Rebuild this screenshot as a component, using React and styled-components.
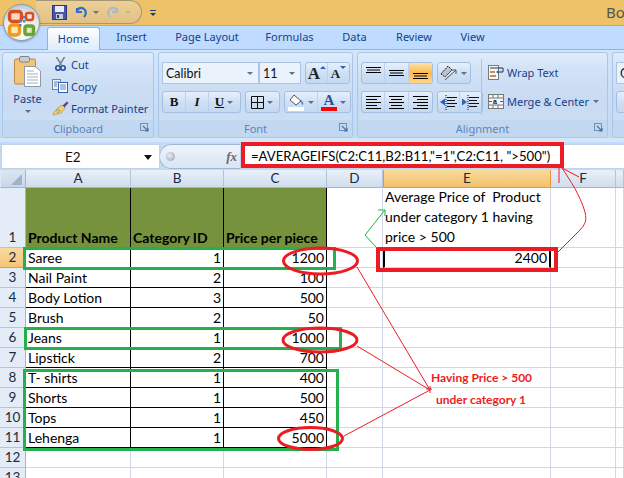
import React from "react";
import styled, { createGlobalStyle } from "styled-components";

const Global = createGlobalStyle`
  html, body { margin: 0; padding: 0; background: #fff; }
  * { box-sizing: border-box; }
`;
const UI = `"Noto Sans", "Open Sans", sans-serif`;
const CELL = `Lato, "Liberation Sans", sans-serif`;

const Window = styled.div`
  position: relative; width: 624px; height: 478px; overflow: hidden;
  display: flex; flex-direction: column; background: #bfdbff; font-family: ${UI};
`;
const TitleBar = styled.div`
  height: 26px; flex: none; background: #edc268; border-bottom: 1px solid #c9a664;
  display: flex; align-items: center; padding-left: 36px; position: relative;
`;
const QuickAccess = styled.div`
  height: 24px; width: 106px; margin-top: -1px; display: flex; align-items: center; padding-left: 16px;
  background: linear-gradient(#ecd096, #e2c184); border: 1px solid #a89678; border-left: none; border-radius: 0 13px 13px 0;
`;
const Spacer = styled.span`
  width: ${p => p.$w}px; flex: none; display: block;
`;
const Caret = styled.span`
  width: 0; height: 0; border-left: 3px solid transparent; border-right: 3px solid transparent;
  border-top: 3px solid ${p => p.$c || "#5a6f94"}; display: inline-block; flex: none;
  margin-left: ${p => p.$ml || 0}px;
`;
const Customize = styled.span`
  width: 6px; flex: none; margin-left: 8px; border-top: 1px solid #1f3d7a; padding-top: 2px; display: flex;
`;
const TitleText = styled.div`
  position: absolute; left: 606px; top: 2px; font-size: 15px; color: #555; white-space: nowrap;
`;
const OfficeBtn = styled.div`
  position: absolute; left: 3px; top: 4px; width: 37px; height: 37px; border-radius: 50%; z-index: 3;
  background: radial-gradient(circle at 50% 72%, #ffffff, #e6ebf1 55%, #a3afbd 100%);
  border: 1px solid #8c9aab; box-shadow: 0 1px 2px #0005; display: flex; align-items: center; justify-content: center;
`;
const Tabs = styled.div`
  height: 24px; flex: none; display: flex; padding-left: 47px; align-items: flex-end; font-size: 11px; color: #15428b;
  border-bottom: 1px solid #8db2e3; background: #bfdbff;
`;
const Tab = styled.div`
  height: 23px; width: ${p => p.$w}px; text-align: center; line-height: 22px; flex: none;
  ${p => p.$active && `background: linear-gradient(#fff, #dcebfb); border: 1px solid #8db2e3; border-bottom: none; border-radius: 3px 3px 0 0; height: 23px; margin-bottom:-1px;`}
`;
const Ribbon = styled.div`
  height: 92px; flex: none; display: flex; gap: 4px; padding: 2px 0 4px 2px;
  background: linear-gradient(#d3e5fa, #c2d9f3 94%, #b5e0ea 94%, #b5e0ea 96%, #d7e6f7 96%);
`;
const Group = styled.section`
  width: ${p => p.$w}px; flex: none; display: flex; flex-direction: column; position: relative;
  border: 1px solid #a9c6e8; border-radius: 3px; overflow: hidden;
  background: linear-gradient(#dfecfb, #d3e3f7 18%, #c7daf1 60%, #d2e3f6);
`;
const GroupBody = styled.div`
  flex: 1; min-height: 0; position: relative; display: flex;
`;
const GroupLabel = styled.div`
  height: 17px; flex: none; background: #c2d8f1; color: #5f84b7; font-size: 11px; text-align: center; line-height: 18px; position: relative;
`;
const Launcher = styled.svg`
  position: absolute; right: 3px; top: 3px;
`;
const PasteCol = styled.div`
  width: 47px; flex: none; display: flex; flex-direction: column; align-items: center; padding-top: 3px; padding-left: 2px; color: #15428b; font-size: 11px; line-height: 14px;
`;
const PasteLabel = styled.div` margin-top: 5px; margin-bottom: 4px; `;
const ClipCol = styled.div`
  display: flex; flex-direction: column; margin-left: 1px;
`;
const ClipRow = styled.div`
  height: 22px; display: flex; align-items: center; gap: 2px; color: #15428b; font-size: 11px; white-space: nowrap;
`;
const IconSlot = styled.span`
  width: 18px; flex: none; display: flex; justify-content: center;
`;
const Rows = styled.div`
  display: flex; flex-direction: column; gap: 7px; padding: 9px 0 0 3px;
`;
const ToolRow = styled.div`
  display: flex; gap: ${p => p.$gap ?? 4}px; height: 22px;
`;
const Combo = styled.div`
  width: ${p => p.$w}px; height: 22px; background: #eaf2fc; border: 1px solid #a9c4e4; font-family: ${CELL};
  font-size: 12.5px; color: #111; display: flex; align-items: center; padding: 0 5px 0 3px; justify-content: space-between;
`;
const BtnGroup = styled.div`
  display: flex; height: 22px; border: 1px solid #a3c0e2; border-radius: 3px; overflow: hidden;
  background: linear-gradient(#e6f0fc, #cfe0f5 50%, #c4d8f1);
  margin-left: ${p => p.$ml || 0}px;
`;
const Btn = styled.div`
  width: ${p => p.$w || 23}px; height: 100%; display: flex; align-items: center; justify-content: center; gap: 3px;
  border-right: 1px solid ${p => p.$last ? "transparent" : "#bcd2ec"};
  color: #111; font-family: "Liberation Serif", serif; font-weight: bold; font-size: 13px;
  ${p => p.$on && `background: linear-gradient(#fde3a8, #fbb950 50%, #fdd78a);`}
`;
const GrowBtn = styled(Btn)`
  align-items: flex-start; gap: 0; font-size: ${p => p.$size}px; line-height: 21px; color: #222; padding-left: 1px;
`;
const Arrow = styled.span`
  width: 0; height: 0; margin-top: 3px; border-left: 3px solid transparent; border-right: 3px solid transparent;
  ${p => p.$up ? "border-bottom: 3px solid #2f62b5;" : "border-top: 3px solid #2f62b5;"}
`;
const ColorA = styled.span`
  display: flex; flex-direction: column; align-items: center; width: 16px; font-size: 15px; line-height: 14px; color: #2f4f8f;
  border-bottom: 4px solid #f00;
`;
const Divider = styled.div`
  position: absolute; left: 123px; top: 6px; width: 1px; height: 56px; background: #a9c4e4;
`;
const WrapCol = styled.div`
  position: absolute; left: 130px; top: 8px; display: flex; flex-direction: column; gap: 7px; color: #15428b; font-size: 11px;
`;
const WrapRow = styled.div`
  height: 22px; display: flex; align-items: center; gap: 2px; white-space: nowrap;
`;
const FormulaBar = styled.div`
  height: 26px; flex: none; margin-top: 2px; display: flex; background: #c5d9f1; position: relative;
`;
const NameBox = styled.div`
  width: 159px; height: 25px; background: #fff; border: 1px solid #bfd3ea; font-family: ${CELL}; font-size: 13.5px; color: #111;
  display: flex; align-items: center; padding-left: 63px; margin-left: 1px; position: relative;
`;
const NameCaret = styled.span`
  position: absolute; right: 7px; top: 10px; border-left: 4px solid transparent; border-right: 4px solid transparent; border-top: 5px solid #111;
`;
const FxPill = styled.div`
  width: 81px; height: 25px; margin-left: -1px; background: linear-gradient(#eef4fc, #d8e5f4); border: 1px solid #9fb7d4;
  border-right: none; border-radius: 13px 0 0 13px; display: flex; align-items: center; padding-left: 6px; justify-content: space-between; padding-right: 3px;
`;
const Knob = styled.span`
  width: 9px; height: 9px; border-radius: 50%; background: radial-gradient(circle at 40% 40%, #eef, #8f9bab);
`;
const Fx = styled.span`
  font-family: "Liberation Serif", serif; font-style: italic; font-weight: bold; font-size: 13px; color: #6a6a6a;
`;
const FormulaInput = styled.div`
  flex: 1; height: 25px; background: #fff; border: 1px solid #bfd3ea; border-right: none;
  font-family: ${CELL}; font-size: 13.15px; color: #000; line-height: 22px; padding-left: 10px; white-space: pre;
`;
const Sheet = styled.div`
  flex: 1; min-height: 0; display: grid; background: #fff; margin-top: -1px;
  grid-template-columns: 26px 105px 93px 103px 56px 168px 65px 1fr;
  grid-template-rows: 19px 60px repeat(11, 20px) 20px;
  font-family: ${CELL}; font-size: 14px; color: #000;
`;
const Corner = styled.div`
  background: linear-gradient(#dbe6f3, #c8d7e8); border-right: 1px solid #9eb6ce; border-bottom: 1px solid #9eb6ce;
  border-left: 1px solid #dfe9f5; border-top: 1px solid #dfe9f5; display: flex; align-items: flex-end; justify-content: flex-end; padding: 0 3px 2px 0;
`;
const ColHead = styled.div`
  background: ${p => p.$on ? "linear-gradient(#f9dba0, #f1c26a)" : "linear-gradient(#eaf1fa, #d0dded)"};
  border-right: 1px solid ${p => p.$on ? "#f29536" : "#b1c4d9"}; border-bottom: 1px solid ${p => p.$on ? "#f29536" : "#9eb6ce"};
  ${p => p.$on && "border-left: 1px solid #f29536;"}
  text-align: center; font-size: 13.5px; color: #1c2a3f; line-height: 18px;
`;
const RowHead = styled.div`
  background: ${p => p.$on ? "linear-gradient(#f9d99f, #f6c574)" : "#e4ecf7"};
  border-right: 1px solid ${p => p.$on ? "#f29536" : "#9eb6ce"}; border-bottom: 1px solid ${p => p.$on ? "#f29536" : "#b1c4d9"};
  display: flex; align-items: flex-end; justify-content: center; font-size: 13.5px; color: #1c2a3f; line-height: 19px;
`;
const Cell = styled.div`
  border-right: 1px solid ${p => p.$ink ? "#000" : "#d0d7e5"};
  border-bottom: 1px solid ${p => p.$ink ? "#000" : "#d0d7e5"};
  background: ${p => p.$head ? "#76923c" : "#fff"};
  font-weight: ${p => p.$head ? 700 : 400};
  text-align: ${p => p.$num ? "right" : "left"};
  padding: 0 2px; line-height: 19px; white-space: pre;
  ${p => p.$head && "display:flex; align-items:flex-end;"}
  ${p => p.$selected && "border: 1px solid #000; border-width: 0 2px 0 2px; border-bottom:1px solid #d0d7e5;"}
`;
const Wrapped = styled.div`
  border-right: 1px solid #d0d7e5; border-bottom: 1px solid #d0d7e5; padding: 0 2px; line-height: 20px; white-space: pre-wrap;
  display: flex; align-items: flex-end;
`;
const Marks = styled.svg`
  position: absolute; left: 0; top: 0; width: 624px; height: 478px; pointer-events: none; z-index: 5;
`;
const Note = styled.div`
  position: absolute; z-index: 6; left: ${p => p.$x}px; top: ${p => p.$y}px; color: #ed1c24; font-family: ${CELL};
  font-weight: 700; font-size: 12px; line-height: 16px; white-space: nowrap;
`;
const FormulaMark = styled.div`
  position: absolute; left: 241px; top: 142px; width: 323px; height: 26px; border: 4px solid #ed1c24; z-index: 5;
`;

const OfficeLogo = () => (
  <svg width="30" height="30" viewBox="0 0 30 30">
    <rect x="2.5" y="3.5" width="12" height="10" rx="3" fill="#f7d9c4" stroke="#d9501e" strokeWidth="3.5" />
    <rect x="2.5" y="17" width="10" height="10" rx="3" fill="#fbe8b8" stroke="#f09a1c" strokeWidth="3.5" />
    <rect x="19" y="5" width="7" height="7" rx="2" fill="#fbe3d2" stroke="#d9501e" strokeWidth="2.5" />
    <rect x="18" y="18" width="8.5" height="8.5" rx="2" fill="#dcebc4" stroke="#6aa336" strokeWidth="3.5" />
    <g fill="#4f86c6">
      <rect x="12" y="12" width="2.5" height="2.5" /><rect x="16" y="12" width="2.5" height="2.5" />
      <rect x="12" y="16" width="2.5" height="2.5" /><rect x="16" y="8" width="2.5" height="2.5" />
    </g>
  </svg>
);
const SaveIcon = () => (
  <svg width="15" height="15" viewBox="0 0 15 15">
    <rect x="0.5" y="0.5" width="14" height="14" fill="#4a57a8" stroke="#2b3580" />
    <rect x="3" y="1" width="9" height="6" fill="#e8ecf8" />
    <rect x="4" y="9" width="7" height="5" fill="#c4cbe0" /><rect x="5" y="10" width="2" height="3" fill="#2b3580" />
  </svg>
);
const Undo = ({ c, flip }) => (
  <svg width="13" height="13" viewBox="0 0 13 13" fill="none">
    <path d={flip ? "M11 2 V6 H6 M11 5 C9 1 5 1 3 4 C2 6 2 9 4 11" : "M2 2 V6 H7 M2 5 C4 1 8 1 10 4 C11 6 11 9 9 11"} stroke={c} strokeWidth="2.2" />
  </svg>
);
const Launch = () => (
  <Launcher width="10" height="10" viewBox="0 0 10 10">
    <rect x=".5" y=".5" width="7" height="7" fill="none" stroke="#6f8fbb" />
    <path d="M3 3 L8 8 M8 5 V8 H5" stroke="#4e6f9e" strokeWidth="1.2" fill="none" />
  </Launcher>
);
const Clipboard = () => (
  <svg width="27" height="31" viewBox="0 0 27 31">
    <rect x=".5" y="3" width="21" height="25" rx="1.5" fill="#f3c476" stroke="#b98a3f" />
    <rect x="5.5" y="0.5" width="10" height="5.5" rx="1.5" fill="#c9ced6" stroke="#7d848f" />
    <path d="M10.5 10.5 H21 L26.5 15 V30.5 H10.5 Z" fill="#fff" stroke="#8d99a8" />
    <path d="M13 15 H20 M13 18 H24 M13 21 H24 M13 24 H24 M13 27 H24" stroke="#a5afbc" />
  </svg>
);
const Scissors = () => (
  <svg width="11" height="14" viewBox="0 0 11 14" fill="none">
    <path d="M1.5 0 L6.5 8 M9.5 0 L4.5 8" stroke="#7b8794" strokeWidth="1.6" />
    <circle cx="3" cy="11" r="2.2" stroke="#2a4c9c" strokeWidth="1.6" />
    <circle cx="8" cy="11" r="2.2" stroke="#2a4c9c" strokeWidth="1.6" />
  </svg>
);
const CopyIcon = () => (
  <svg width="16" height="14" viewBox="0 0 16 14">
    <rect x=".5" y=".5" width="8" height="10" fill="#eef3fa" stroke="#6d86a8" />
    <rect x="6.5" y="3.5" width="9" height="10" fill="#fff" stroke="#2f62b5" />
    <path d="M8 6 H14 M8 8 H14 M8 10 H14 M2 3 H7 M2 5 H5 M2 7 H5" stroke="#5c7fb5" />
  </svg>
);
const Brush = () => (
  <svg width="17" height="15" viewBox="0 0 17 15">
    <path d="M10 5 L15 0.5 L16.5 2 L12 7 Z" fill="#5a4a88" />
    <path d="M10 4 L13 7 L9 12 L1 14 L2 11 L6 7 Z" fill="#f1d27a" stroke="#b28f3c" strokeWidth=".7" />
    <path d="M4 10 L7 8 M5 12 L9 9" stroke="#b28f3c" />
  </svg>
);
const BorderIcon = () => (
  <svg width="13" height="13" viewBox="0 0 13 13" fill="none"><path d="M.5 .5 H12.5 V12.5 H.5 Z M6.5 0 V13 M0 6.5 H13" stroke="#111" /></svg>
);
const FillIcon = () => (
  <svg width="17" height="17" viewBox="0 0 17 17">
    <path d="M6 1 L13 7 L8 11 L2 6 Z" fill="#fff" stroke="#555" />
    <path d="M13 6 Q16 9 15 11 Q13 10 13 6Z" fill="#3d78c9" />
    <rect x="0" y="13" width="16" height="4" fill="#fff" />
  </svg>
);
const Lines = ({ w }) => {
  const ys = [1.5, 4.5, 7.5, 10.5, 13.5];
  return (
    <svg width="15" height="15" viewBox="0 0 15 15" fill="none" stroke="#000">
      {ys.map((y, i) => {
        const short = i % 2 === 1 ? 4 : 0;
        const x1 = w === "right" ? short : w === "center" ? short / 2 : 0;
        const x2 = w === "left" ? 15 - short : w === "center" ? 15 - short / 2 : 15;
        return <path key={y} d={`M${x1} ${y} H${x2}`} />;
      })}
    </svg>
  );
};
const VLines = ({ at }) => (
  <svg width="15" height="14" viewBox="0 0 15 14" fill="none" stroke="#000">
    {[0, 2.5, 5].map((d, i) => <path key={d} d={`M${i === 1 ? 1 : 0} ${at + d + .5} H${i === 1 ? 14 : 15}`} />)}
  </svg>
);
const Orient = () => (
  <svg width="18" height="16" viewBox="0 0 18 16" fill="none">
    <path d="M1 9 L8 1 L12 5 L5 12 Z" fill="#b9c2ce" stroke="#222" strokeDasharray="2 1" />
    <path d="M5 15 L16 5 M12 5 H16 V9" stroke="#555" />
  </svg>
);
const Indent = ({ out }) => (
  <svg width="17" height="15" viewBox="0 0 17 15" fill="none">
    <path d="M7 2.5 H17 M7 5.5 H15 M7 8.5 H17 M7 11.5 H15" stroke="#111" />
    <path d={out ? "M0 7 L5 3.5 V10.5 Z" : "M5 7 L0 3.5 V10.5 Z"} fill="#2f62b5" />
    <path d="M6 0 V15" stroke="#111" strokeDasharray="1 1" />
  </svg>
);
const WrapIcon = () => (
  <svg width="17" height="15" viewBox="0 0 17 15" fill="none">
    <rect x=".5" y=".5" width="10" height="14" fill="#f5f7fb" stroke="#7b7b7b" />
    <path d="M2 3 H15 V7 H9" stroke="#333" /><path d="M2 7 H7 M2 11 H8" stroke="#b06f28" strokeWidth="1.5" /><path d="M11 5 L8 7 L11 9 Z" fill="#2f62b5" />
  </svg>
);
const MergeIcon = () => (
  <svg width="17" height="15" viewBox="0 0 17 15" fill="none">
    <rect x=".5" y=".5" width="15" height="14" fill="#f5f7fb" stroke="#777" />
    <path d="M5 1 V4 M10 1 V4 M5 11 V14 M10 11 V14 M1 4 H15 M1 11 H15" stroke="#777" />
    <text x="5" y="10" fontSize="7" fontFamily="Liberation Sans" fontWeight="bold" fill="#111">a</text>
    <path d="M1 7.5 H4 M12 7.5 H15" stroke="#2f62b5" />
  </svg>
);
const CornerMark = () => (
  <svg width="11" height="11" viewBox="0 0 11 11"><path d="M11 0 V11 H0 Z" fill="#9fb2c7" /></svg>
);

const columns = ["A", "B", "C", "D", "E", "F", ""];
const rows = [
  ["Saree", 1, 1200], ["Nail Paint", 2, 100], ["Body Lotion", 3, 500], ["Brush", 2, 50],
  ["Jeans", 1, 1000], ["Lipstick", 2, 700], ["T- shirts", 1, 400], ["Shorts", 1, 500],
  ["Tops", 1, 450], ["Lehenga", 1, 5000],
];

function Blank({ n }) {
  return Array.from({ length: n }, (_, i) => <Cell key={i} />);
}

export default function App() {
  return (
    <Window>
      <Global />
      <OfficeBtn><OfficeLogo /></OfficeBtn>
      <TitleBar>
        <QuickAccess>
          <SaveIcon />
          <Spacer $w={8} />
          <Undo c="#2f6fc4" /><Caret $ml={5} />
          <Spacer $w={7} />
          <Undo c="#a6bad0" flip /><Caret $c="#b9b5a5" $ml={6} />
        </QuickAccess>
        <Customize><Caret $c="#1f3d7a" /></Customize>
        <TitleText>Bo</TitleText>
      </TitleBar>
      <Tabs>
        <Tab $w={53} $active>Home</Tab>
        <Tab $w={63}>Insert</Tab>
        <Tab $w={88}>Page Layout</Tab>
        <Tab $w={77}>Formulas</Tab>
        <Tab $w={53}>Data</Tab>
        <Tab $w={66}>Review</Tab>
        <Tab $w={51}>View</Tab>
      </Tabs>
      <Ribbon>
        <Group $w={152}>
          <GroupBody>
            <PasteCol>
              <Clipboard />
              <PasteLabel>Paste</PasteLabel>
              <Caret />
            </PasteCol>
            <ClipCol>
              <ClipRow><IconSlot><Scissors /></IconSlot><span>Cut</span></ClipRow>
              <ClipRow><IconSlot><CopyIcon /></IconSlot><span>Copy</span></ClipRow>
              <ClipRow><IconSlot><Brush /></IconSlot><span>Format Painter</span></ClipRow>
            </ClipCol>
          </GroupBody>
          <GroupLabel>Clipboard<Launch /></GroupLabel>
        </Group>
        <Group $w={195}>
          <GroupBody>
            <Rows>
              <ToolRow $gap={0}>
                <Combo $w={97}>Calibri<Caret /></Combo>
                <Combo $w={42}>11<Caret /></Combo>
                <BtnGroup $ml={4}>
                  <GrowBtn $w={22} $size={17}>A<Arrow $up /></GrowBtn>
                  <GrowBtn $w={21} $size={13} $last>A<Arrow /></GrowBtn>
                </BtnGroup>
              </ToolRow>
              <ToolRow>
                <BtnGroup>
                  <Btn $w={23}>B</Btn>
                  <Btn $w={23}><i>I</i></Btn>
                  <Btn $w={31} $last><u>U</u><Caret /></Btn>
                </BtnGroup>
                <BtnGroup><Btn $w={33} $last><BorderIcon /><Caret /></Btn></BtnGroup>
                <BtnGroup>
                  <Btn $w={33}><FillIcon /><Caret /></Btn>
                  <Btn $w={32} $last><ColorA>A</ColorA><Caret /></Btn>
                </BtnGroup>
              </ToolRow>
            </Rows>
          </GroupBody>
          <GroupLabel>Font<Launch /></GroupLabel>
        </Group>
        <Group $w={251}>
          <GroupBody>
            <Rows>
              <ToolRow>
                <BtnGroup>
                  <Btn $w={23}><VLines at={1} /></Btn>
                  <Btn $w={24}><VLines at={4} /></Btn>
                  <Btn $w={23} $last $on><VLines at={7} /></Btn>
                </BtnGroup>
                <BtnGroup><Btn $w={32} $last><Orient /><Caret /></Btn></BtnGroup>
              </ToolRow>
              <ToolRow>
                <BtnGroup>
                  <Btn $w={23}><Lines w="left" /></Btn>
                  <Btn $w={24}><Lines w="center" /></Btn>
                  <Btn $w={23} $last><Lines w="right" /></Btn>
                </BtnGroup>
                <BtnGroup>
                  <Btn $w={22}><Indent out /></Btn>
                  <Btn $w={22} $last><Indent /></Btn>
                </BtnGroup>
              </ToolRow>
            </Rows>
            <Divider />
            <WrapCol>
              <WrapRow><WrapIcon /><span>Wrap Text</span></WrapRow>
              <WrapRow><MergeIcon /><span>Merge &amp; Center</span><Caret $ml={2} /></WrapRow>
            </WrapCol>
          </GroupBody>
          <GroupLabel>Alignment<Launch /></GroupLabel>
        </Group>
        <Group $w={40}>
          <GroupBody>
            <Rows>
              <ToolRow><Combo $w={40}>G</Combo></ToolRow>
              <ToolRow><BtnGroup><Btn $w={40} $last>$</Btn></BtnGroup></ToolRow>
            </Rows>
          </GroupBody>
          <GroupLabel />
        </Group>
      </Ribbon>
      <FormulaBar>
        <NameBox>E2<NameCaret /></NameBox>
        <FxPill><Knob /><Fx>fx</Fx></FxPill>
        <FormulaInput>=AVERAGEIFS(C2:C11,B2:B11,"=1",C2:C11, "&gt;500")</FormulaInput>
      </FormulaBar>
      <Sheet>
        <Corner><CornerMark /></Corner>
        {columns.map((c, i) => <ColHead key={i} $on={c === "E"}>{c}</ColHead>)}
        <RowHead>1</RowHead>
        <Cell $ink $head>Product Name</Cell>
        <Cell $ink $head>Category ID</Cell>
        <Cell $ink $head>Price per piece</Cell>
        <Cell />
        <Wrapped>{"Average Price of  Product under category 1 having price > 500"}</Wrapped>
        <Blank n={2} />
        {rows.map((r, i) => (
          <React.Fragment key={r[0]}>
            <RowHead $on={i === 0}>{i + 2}</RowHead>
            <Cell $ink>{r[0]}</Cell>
            <Cell $ink $num>{r[1]}</Cell>
            <Cell $ink $num>{r[2]}</Cell>
            <Cell />
            {i === 0 ? <Cell $num $selected>2400</Cell> : <Cell />}
            <Blank n={2} />
          </React.Fragment>
        ))}
        <RowHead>12</RowHead><Blank n={7} />
        <RowHead>13</RowHead><Blank n={7} />
      </Sheet>
      <FormulaMark />
      <Marks viewBox="0 0 624 478" fill="none">
        <g stroke="#22b14c" strokeWidth="3">
          <rect x="24.5" y="248.5" width="310" height="20" />
          <rect x="25.5" y="328.5" width="315" height="20" />
          <rect x="24.5" y="370.5" width="313" height="79" />
        </g>
        <g stroke="#ed1c24" strokeWidth="3">
          <ellipse cx="320.5" cy="261" rx="37" ry="13" />
          <ellipse cx="320" cy="340" rx="37" ry="12" />
          <ellipse cx="310.5" cy="438.5" rx="32" ry="11" />
        </g>
        <rect x="378" y="249" width="178" height="21" stroke="#ed1c24" strokeWidth="4" />
        <g stroke="#ed1c24" strokeWidth="1">
          <path d="M357 267 L430 390 M357 346 L430 390 M344 436 L430 390" />
          <path d="M426 389 H432 M430 386 V393" />
          <path d="M562 168 L579 177 M559 168 V183" />
          <path d="M562 168 C570 180 580 195 585 212 C587 222 585 224 580 230 L558 252" />
        </g>
        <path d="M385 210 L365 235 L377 248 M378 210 H385 V216" stroke="#22b14c" strokeWidth="1" />
      </Marks>
      <Note $x={431} $y={370}>Having Price &gt; 500</Note>
      <Note $x={436} $y={392}>under category 1</Note>
    </Window>
  );
}
